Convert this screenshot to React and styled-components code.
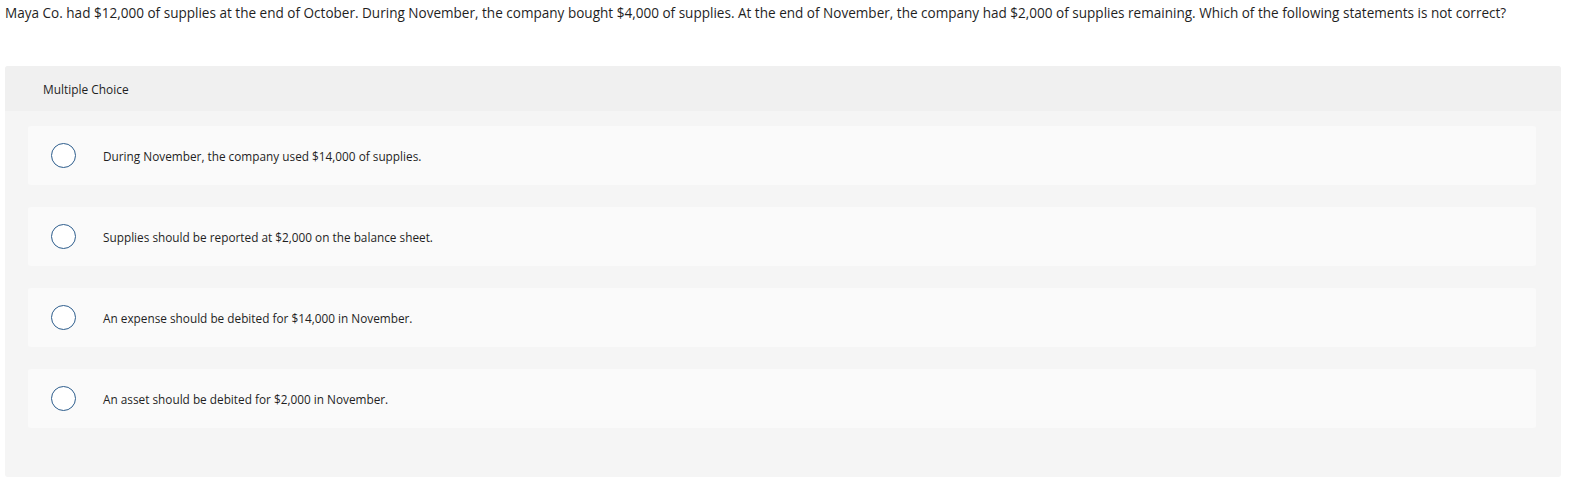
import React from "react";
import styled, { createGlobalStyle } from "styled-components";

const GlobalStyle = createGlobalStyle`
  body {
    margin: 0;
    background: #ffffff;
    font-family: "Open Sans", "Liberation Sans", Arial, sans-serif;
    color: #1f1f1f;
  }
`;

const options = [
  "During November, the company used $14,000 of supplies.",
  "Supplies should be reported at $2,000 on the balance sheet.",
  "An expense should be debited for $14,000 in November.",
  "An asset should be debited for $2,000 in November.",
];

const App = () => {
  return (
    <Root>
      <GlobalStyle />
      <Question>
        Maya Co. had $12,000 of supplies at the end of October. During November, the company
        bought $4,000 of supplies. At the end of November, the company had $2,000 of supplies
        remaining. Which of the following statements is not correct?
      </Question>
      <Panel>
        <PanelHeader>Multiple Choice</PanelHeader>
        <OptionList>
          {options.map((text) => (
            <Option key={text}>
              <Radio />
              <OptionText>{text}</OptionText>
            </Option>
          ))}
        </OptionList>
      </Panel>
    </Root>
  );
};

export default App;

const Root = styled.div`
  padding: 4px 14px 0 5px;
`;

const Question = styled.p`
  margin: 0;
  font-size: 13.55px;
  line-height: 18px;
  color: #1f1f1f;
  white-space: nowrap;
`;

const Panel = styled.div`
  margin-top: 44px;
  background: #f5f5f5;
  border-radius: 3px;
  overflow: hidden;
`;

const PanelHeader = styled.div`
  display: flex;
  align-items: center;
  height: 45px;
  padding-left: 38px;
  background: #f0f0f0;
  font-size: 11.9px;
  color: #1f1f1f;
`;

const OptionList = styled.div`
  display: flex;
  flex-direction: column;
  gap: 22px;
  padding: 15px 25px 49px 23px;
`;

const Option = styled.label`
  display: flex;
  align-items: center;
  gap: 27px;
  height: 59px;
  padding-left: 23px;
  background: #fafafa;
  border-radius: 3px;
  cursor: pointer;
`;

const Radio = styled.span`
  flex: none;
  box-sizing: border-box;
  width: 25px;
  height: 25px;
  border-radius: 50%;
  border: 1.5px solid #2d5d8c;
  background: #ffffff;
`;

const OptionText = styled.span`
  font-size: 11.8px;
  color: #1f1f1f;
`;
